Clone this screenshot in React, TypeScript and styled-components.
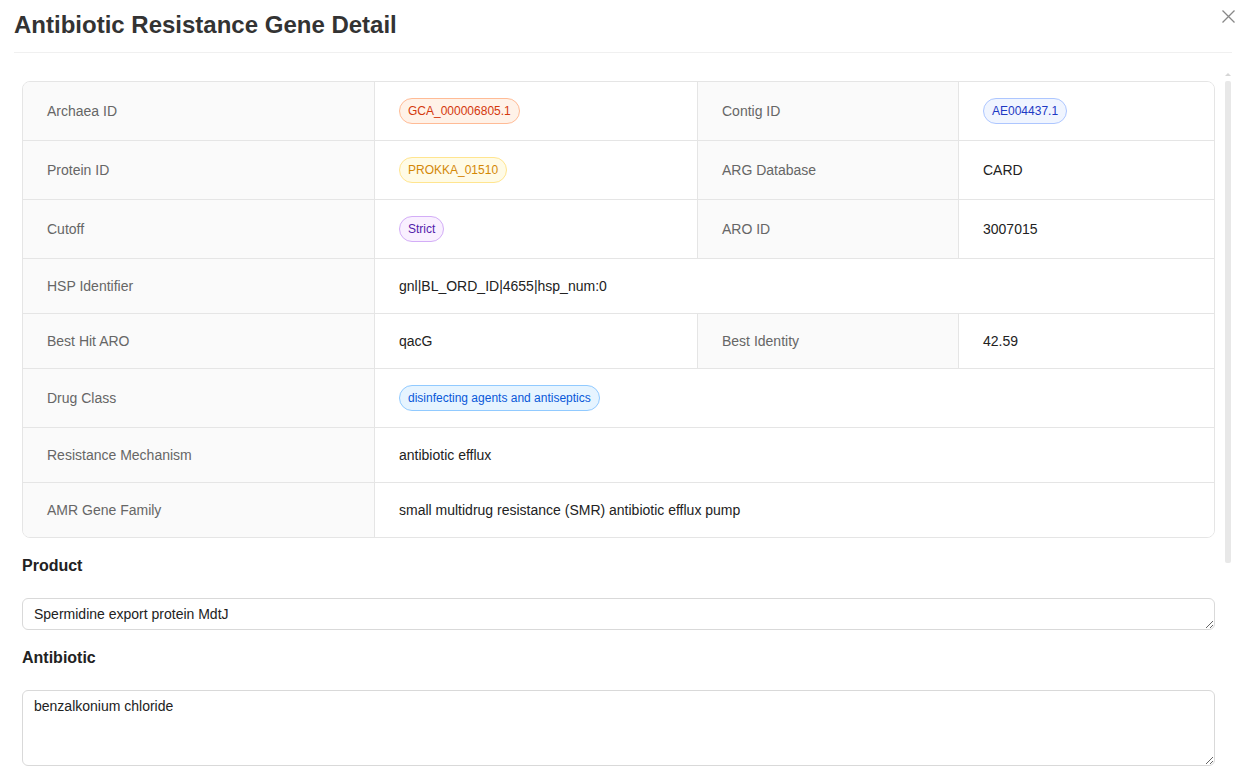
import React from "react";
import styled, { createGlobalStyle } from "styled-components";

const GlobalStyle = createGlobalStyle`
  html, body { margin: 0; padding: 0; background: #ffffff; }
  body { font-family: "Liberation Sans", Arial, sans-serif; color: #222; }
  * { box-sizing: border-box; }
`;

const Page = styled.div`
  position: relative;
  height: 780px;
  padding: 0 15px 0 14px;
  display: flex;
  flex-direction: column;
  overflow: hidden;
`;

const Header = styled.div`
  padding: 9px 0 11px;
  border-bottom: 1px solid #f0f0f0;
`;

const Title = styled.h1`
  margin: 0;
  font-size: 24px;
  line-height: 32px;
  font-weight: 700;
  color: #333;
`;

const CloseButton = styled.button`
  position: absolute;
  top: 7px;
  right: 9px;
  width: 19px;
  height: 19px;
  padding: 3px;
  border: none;
  background: transparent;
  display: flex;
  align-items: center;
  justify-content: center;
  cursor: pointer;
`;

const ScrollFrame = styled.div`
  position: relative;
  flex: 1;
  min-height: 0;
  margin-top: 19px;
`;

const ScrollBody = styled.div`
  height: 100%;
  padding-right: 9px;
  overflow-y: auto;
  scrollbar-width: none;
  &::-webkit-scrollbar { display: none; }
`;

const Track = styled.div`
  position: absolute;
  top: 0;
  right: -1px;
  bottom: 0;
  width: 10px;
  pointer-events: none;
`;

const ArrowUp = styled.div`
  position: absolute;
  top: 1px;
  left: 2px;
  width: 0;
  height: 0;
  border-left: 3px solid transparent;
  border-right: 3px solid transparent;
  border-bottom: 3px solid #d6d6d6;
`;

const Thumb = styled.div`
  position: absolute;
  top: 9px;
  left: 2px;
  width: 6px;
  height: 482px;
  border-radius: 2px;
  background: #e8e8e8;
`;

const Content = styled.div`
  padding: 9px 8px 330px;
`;

const Table = styled.div`
  display: grid;
  grid-template-columns: 352px 323px 261px 1fr;
  border: 1px solid #e5e5e5;
  border-radius: 8px;
  overflow: hidden;
`;

const Cell = styled.div<{ $label?: boolean; $span?: number; $last?: boolean; $bottom?: boolean }>`
  grid-column: span ${(p) => p.$span ?? 1};
  display: flex;
  align-items: center;
  padding: 16px 24px;
  font-size: 14px;
  line-height: 22px;
  background: ${(p) => (p.$label ? "#fafafa" : "#ffffff")};
  color: ${(p) => (p.$label ? "#666666" : "#222222")};
  border-right: ${(p) => (p.$last ? "none" : "1px solid #e5e5e5")};
  border-bottom: ${(p) => (p.$bottom ? "none" : "1px solid #e5e5e5")};
`;

const tagColors = {
  volcano: { bg: "#fff2e8", border: "#ffbb96", color: "#d4380d" },
  gold: { bg: "#fffbe6", border: "#ffe58f", color: "#d48806" },
  purple: { bg: "#f9f0ff", border: "#d3adf7", color: "#531dab" },
  geekblue: { bg: "#f0f5ff", border: "#adc6ff", color: "#1d39c4" },
  blue: { bg: "#e6f4ff", border: "#91caff", color: "#0958d9" },
};

type TagColor = keyof typeof tagColors;

const Tag = styled.span<{ $c: TagColor }>`
  display: inline-block;
  height: 26px;
  padding: 0 8px;
  font-size: 12px;
  line-height: 24px;
  border-radius: 13px;
  white-space: nowrap;
  background: ${(p) => tagColors[p.$c].bg};
  border: 1px solid ${(p) => tagColors[p.$c].border};
  color: ${(p) => tagColors[p.$c].color};
`;

const SectionTitle = styled.h4`
  margin: 17px 0 21px;
  font-size: 16px;
  line-height: 22px;
  font-weight: 700;
  color: #222;
`;

const TextArea = styled.textarea`
  display: block;
  width: 100%;
  margin: 0;
  padding: 4px 11px;
  font-family: "Liberation Sans", Arial, sans-serif;
  font-size: 14px;
  line-height: 22px;
  color: #222;
  background: #fff;
  border: 1px solid #d9d9d9;
  border-radius: 6px;
  outline: none;
`;

type Item = { label: string; value: React.ReactNode; span?: number };

const rows: Item[][] = [
  [
    { label: "Archaea ID", value: <Tag $c="volcano">GCA_000006805.1</Tag> },
    { label: "Contig ID", value: <Tag $c="geekblue">AE004437.1</Tag> },
  ],
  [
    { label: "Protein ID", value: <Tag $c="gold">PROKKA_01510</Tag> },
    { label: "ARG Database", value: "CARD" },
  ],
  [
    { label: "Cutoff", value: <Tag $c="purple">Strict</Tag> },
    { label: "ARO ID", value: "3007015" },
  ],
  [{ label: "HSP Identifier", value: "gnl|BL_ORD_ID|4655|hsp_num:0", span: 3 }],
  [
    { label: "Best Hit ARO", value: "qacG" },
    { label: "Best Identity", value: "42.59" },
  ],
  [{ label: "Drug Class", value: <Tag $c="blue">disinfecting agents and antiseptics</Tag>, span: 3 }],
  [{ label: "Resistance Mechanism", value: "antibiotic efflux", span: 3 }],
  [{ label: "AMR Gene Family", value: "small multidrug resistance (SMR) antibiotic efflux pump", span: 3 }],
];

export default function App() {
  return (
    <>
      <GlobalStyle />
      <Page>
        <Header>
          <Title>Antibiotic Resistance Gene Detail</Title>
        </Header>
        <CloseButton aria-label="Close">
          <svg width="13" height="13" viewBox="0 0 13 13" fill="none">
            <path d="M0.5 0.5 L12.5 12.5 M12.5 0.5 L0.5 12.5" stroke="#888" strokeWidth="1.3" />
          </svg>
        </CloseButton>
        <ScrollFrame>
          <ScrollBody>
            <Content>
              <Table>
                {rows.map((row, ri) => {
                  const bottom = ri === rows.length - 1;
                  return row.map((item, ii) => {
                    const isLastItem = ii === row.length - 1;
                    return (
                      <React.Fragment key={`${ri}-${ii}`}>
                        <Cell $label $bottom={bottom}>{item.label}</Cell>
                        <Cell $span={item.span} $last={isLastItem} $bottom={bottom}>
                          {item.value}
                        </Cell>
                      </React.Fragment>
                    );
                  });
                })}
              </Table>
              <SectionTitle>Product</SectionTitle>
              <TextArea rows={1} readOnly defaultValue="Spermidine export protein MdtJ" />
              <SectionTitle>Antibiotic</SectionTitle>
              <TextArea rows={3} readOnly defaultValue="benzalkonium chloride" />
            </Content>
          </ScrollBody>
          <Track>
            <ArrowUp />
            <Thumb />
          </Track>
        </ScrollFrame>
      </Page>
    </>
  );
}
